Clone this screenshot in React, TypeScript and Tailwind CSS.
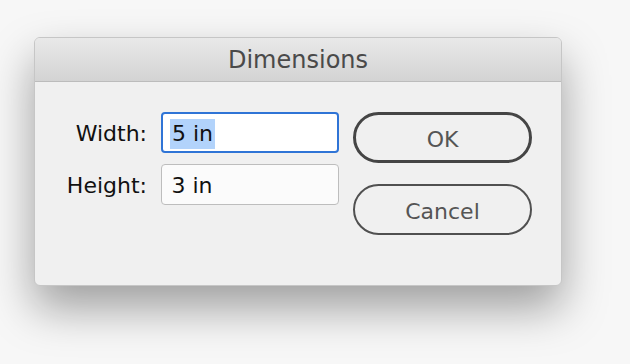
import React from "react";

const font = "font-['DejaVu_Sans',Verdana,sans-serif]";

function Field({ value, focused }: { value: string; focused?: boolean }) {
  return (
    <div
      className={
        focused
          ? "flex h-[41px] items-center rounded-[4px] border-2 border-[#2f74d6] bg-white pl-[7px] pt-[2px]"
          : "flex h-[41px] items-center rounded-[4px] border-[1.5px] border-[#bdbdbd] bg-[#fbfbfb] pl-[9.5px] pt-[2px]"
      }
    >
      {focused ? (
        <span className="bg-[#b2d3fb] px-[2px] leading-[30px] text-[#111]">{value}</span>
      ) : (
        <span className="leading-[30px] text-[#111]">{value}</span>
      )}
    </div>
  );
}

function PillButton({ label, primary }: { label: string; primary?: boolean }) {
  return (
    <div
      className={
        primary
          ? "flex h-[51px] items-center justify-center rounded-full border-[3px] border-[#454545] pt-[3px] text-[#555]"
          : "flex h-[51px] items-center justify-center rounded-full border-2 border-[#505050] pt-[3px] text-[#555]"
      }
    >
      {label}
    </div>
  );
}

export default function App() {
  return (
    <div className={`min-h-[364px] w-[630px] bg-[#f7f7f7] pl-[34px] pt-[37px] ${font}`}>
      <div className="flex h-[249px] w-[528px] flex-col overflow-hidden rounded-[6px] border border-[#c6c6c6] bg-[#f0f0f0] shadow-[0_22px_45px_rgba(0,0,0,0.36)]">
        <div className="flex h-[44px] items-center justify-center border-b border-[#bcbcbc] bg-gradient-to-b from-[#e9e9e9] to-[#d3d3d3] pt-[1px] text-[24px] text-[#4a4a4a]">
          Dimensions
        </div>
        <div className="flex items-start pt-[30px] text-[22px]">
          <div className="grid grid-cols-[112px_178px] content-start gap-x-[14px] gap-y-[11px]">
            <div className="flex h-[41px] items-center justify-end pt-[2px] text-[#111]">Width:</div>
            <Field value="5 in" focused />
            <div className="flex h-[41px] items-center justify-end pt-[2px] text-[#111]">Height:</div>
            <Field value="3 in" />
          </div>
          <div className="ml-[14px] flex w-[179px] flex-col gap-[21px]">
            <PillButton label="OK" primary />
            <PillButton label="Cancel" />
          </div>
        </div>
      </div>
    </div>
  );
}
